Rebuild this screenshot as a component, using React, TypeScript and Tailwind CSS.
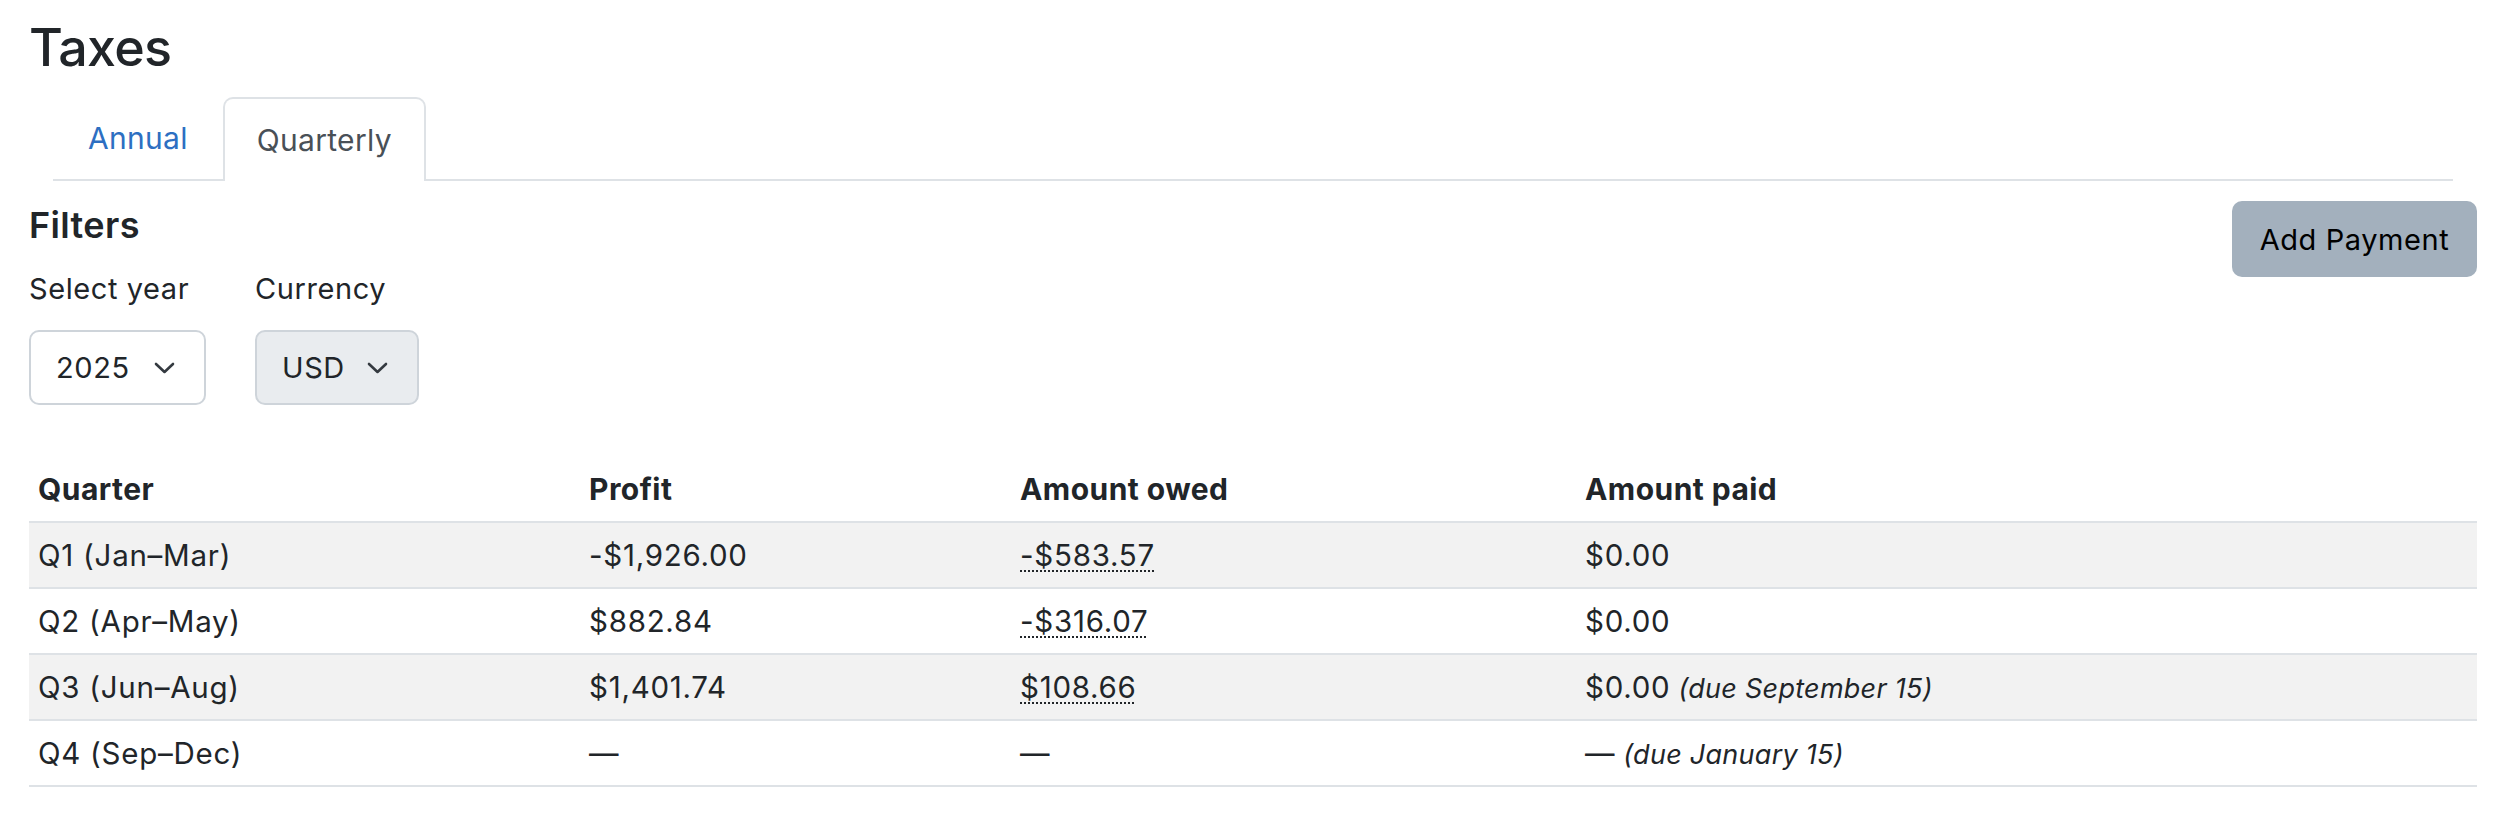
import React from "react";

function Chevron() {
  return (
    <svg width="21" height="12" viewBox="0 0 21 12" fill="none" className="shrink-0">
      <polyline points="2,2 10.5,10 19,2" stroke="#343a40" strokeWidth="2.6" strokeLinecap="round" strokeLinejoin="round" />
    </svg>
  );
}

const rows = [
  { quarter: "Q1 (Jan–Mar)", profit: "-$1,926.00", owed: "-$583.57", paid: "$0.00", due: "" },
  { quarter: "Q2 (Apr–May)", profit: "$882.84", owed: "-$316.07", paid: "$0.00", due: "" },
  { quarter: "Q3 (Jun–Aug)", profit: "$1,401.74", owed: "$108.66", paid: "$0.00", due: "(due September 15)" },
  { quarter: "Q4 (Sep–Dec)", profit: "—", owed: "—", paid: "—", due: "(due January 15)" },
];

export default function App() {
  return (
    <div className="min-h-screen bg-white pl-[29px] pr-[25px] pt-[17px] font-['Inter',sans-serif] text-[#212529] antialiased">
      <h1 className="text-[52px] font-medium leading-[1.2] tracking-[-0.015em]">Taxes</h1>

      <nav className="mx-[24px] mt-[18px] flex border-b-2 border-[#dee2e6] text-[30px] tracking-[0.01em]">
        <a href="#" className="flex h-[82px] items-center px-[35px] text-[#2d6fc2]">Annual</a>
        <a href="#" className="-mb-[2px] flex h-[84px] items-center rounded-t-[10px] border-2 border-b-0 border-[#dee2e6] bg-white px-[32px] text-[#495057]">
          Quarterly
        </a>
      </nav>

      <div className="mt-[20px] flex items-start justify-between">
        <div>
          <h2 className="mt-[3px] text-[36px] font-semibold leading-[1.2] tracking-[0.01em]">Filters</h2>
          <div className="mt-[19px] flex gap-[49px] text-[29px] leading-[1.5] tracking-[0.02em]">
            <div className="flex flex-col gap-[20px]">
              <label>Select year</label>
              <div className="flex h-[75px] w-[177px] items-center justify-between rounded-[10px] border-2 border-[#ced4da] bg-white pl-[25px] pr-[29px]">
                <span>2025</span>
                <Chevron />
              </div>
            </div>
            <div className="flex flex-col gap-[20px]">
              <label>Currency</label>
              <div className="flex h-[75px] w-[164px] items-center justify-between rounded-[10px] border-2 border-[#ced4da] bg-[#e9ecef] pl-[25px] pr-[29px]">
                <span>USD</span>
                <Chevron />
              </div>
            </div>
          </div>
        </div>
        <button className="h-[76px] w-[245px] rounded-[10px] bg-[#a3b0bd] text-[29px] tracking-[0.02em] text-black">
          Add Payment
        </button>
      </div>

      <table className="mt-[52px] w-full border-collapse text-left text-[29.5px] tracking-[0.025em]">
        <thead>
          <tr className="h-[65px] border-b-2 border-[#dee2e6] text-[30px] tracking-[0.015em]">
            <th className="w-[551px] px-[9px] font-bold">Quarter</th>
            <th className="w-[431px] px-[9px] font-bold">Profit</th>
            <th className="w-[565px] px-[9px] font-bold">Amount owed</th>
            <th className="px-[9px] font-bold">Amount paid</th>
          </tr>
        </thead>
        <tbody>
          {rows.map((r, i) => (
            <tr key={r.quarter} className={i % 2 === 0 ? "h-[66px] border-b-2 border-[#dee2e6] bg-[#f2f2f2]" : "h-[66px] border-b-2 border-[#dee2e6] bg-white"}>
              <td className="px-[9px]">{r.quarter}</td>
              <td className="px-[9px]">{r.profit}</td>
              <td className="px-[9px]">
                {r.owed === "—" ? (
                  r.owed
                ) : (
                  <abbr title="Estimated tax" className="cursor-help underline decoration-dotted decoration-2 underline-offset-[5px]">
                    {r.owed}
                  </abbr>
                )}
              </td>
              <td className="px-[9px]">
                {r.paid}
                {r.due && <em className="ml-[8px] text-[27px] tracking-[0.01em]">{r.due}</em>}
              </td>
            </tr>
          ))}
        </tbody>
      </table>
    </div>
  );
}
